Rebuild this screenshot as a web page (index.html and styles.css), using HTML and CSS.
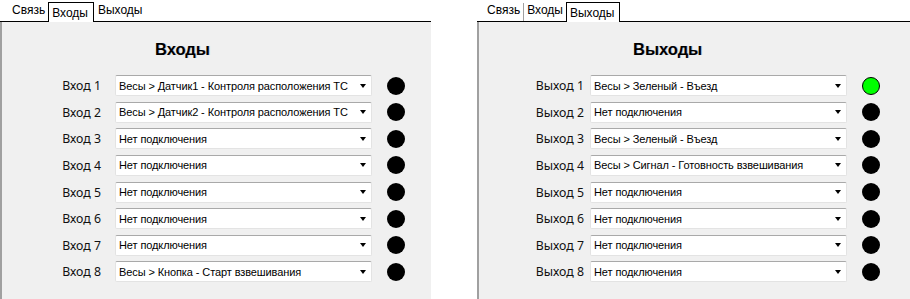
FILE: index.html
```html
<!DOCTYPE html>
<html lang="ru">
<head>
  <meta charset="UTF-8">
  <title>Входы / Выходы</title>
  <link rel="stylesheet" href="styles.css">
</head>
<body>
  <div class="wrap">

    <!-- Панель входов -->
    <div class="panel panel-in">
      <div class="tabs">
        <span class="tab">Связь</span>
        <span class="tab active">Входы</span>
        <span class="tab">Выходы</span>
      </div>
      <div class="content">
        <h2>Входы</h2>
        <div class="rows" id="inputs"></div>
      </div>
    </div>

    <!-- Панель выходов -->
    <div class="panel panel-out">
      <div class="tabs">
        <span class="tab">Связь</span>
        <span class="tab sep">Входы</span>
        <span class="tab active">Выходы</span>
      </div>
      <div class="content">
        <h2>Выходы</h2>
        <div class="rows" id="outputs"></div>
      </div>
    </div>

  </div>

  <script>
    const inputs = [
      "Весы > Датчик1 - Контроля расположения ТС",
      "Весы > Датчик2 - Контроля расположения ТС",
      "Нет подключения", "Нет подключения", "Нет подключения",
      "Нет подключения", "Нет подключения",
      "Весы > Кнопка - Старт взвешивания"
    ];
    const outputs = [
      "Весы > Зеленый - Въезд", "Нет подключения",
      "Весы > Зеленый - Въезд", "Весы > Сигнал - Готовность взвешивания",
      "Нет подключения", "Нет подключения", "Нет подключения", "Нет подключения"
    ];

    function fill(id, name, list, onIdx) {
      const box = document.getElementById(id);
      list.forEach((v, i) => {
        box.innerHTML +=
          `<label>${name} ${i+1}</label>` +
          `<div class="combo"><span>${v}</span><i class="arrow"></i></div>` +
          `<div class="led${i === onIdx ? " on" : ""}"></div>`;
      });
    }

    fill("inputs", "Вход", inputs, -1);
    fill("outputs", "Выход", outputs, 0);
  </script>
</body>
</html>
```

FILE: styles.css
```css
body { margin: 0; background: #fff; font-family: "Liberation Sans", Arial, sans-serif; }
.wrap { display: flex; gap: 46px; height: 299px; }
.panel { display: flex; flex-direction: column; }
.panel-in { width: 431px; }
.panel-out { width: 433px; }

.tabs { height: 21px; border-bottom: 1px solid #000; display: flex; align-items: flex-end; padding-left: 5px; font-size: 12px; }
.panel-out .tabs { padding-left: 6px; }
.tab { padding: 0 3px 3px 4px; height: 15px; color: #000; }
.panel-in .tab:first-child { padding-left: 7px; }
.panel-out .tab:first-child { padding-left: 4px; }
.tab.sep { border-left: 1px solid #a0a0a0; padding-left: 3px; }
.tab.active { background: #fff; border: 1px solid #000; border-bottom: none; height: 19px; padding: 0 5px 0 3px; margin-bottom: -1px; line-height: 20px; }

.content { flex: 1; background: #f0f0f0; border-left: 2px solid #a0a0a0; }
h2 { margin: 0; padding-top: 18px; height: 36px; box-sizing: border-box; font-size: 16.5px; font-weight: bold; text-shadow: 1px 0 0 rgba(40,60,120,0.25); }
.panel-in h2 { padding-left: 153px; }
.panel-out h2 { padding-left: 154px; }

.rows { display: grid; grid-template-columns: 99px 257px 18px; column-gap: 14px; grid-auto-rows: 21px; row-gap: 5.65px; margin-top: 17px; align-items: center; }
.panel-out .rows { grid-template-columns: 105px 257px 18px; column-gap: 6px; }
.rows label { text-align: right; font-family: "Noto Sans", sans-serif; font-size: 12.3px; color: #111; }
.combo { height: 21px; box-sizing: border-box; background: #fff; border: 1px solid #e3e3e3; border-top-color: #a9a9a9; border-radius: 2px; display: flex; align-items: center; padding-left: 3px; font-size: 11px; letter-spacing: -0.1px; color: #000; }
.combo span { flex: 1; white-space: nowrap; overflow: hidden; }
.arrow { flex: none; width: 0; height: 0; border-left: 3.5px solid transparent; border-right: 3.5px solid transparent; border-top: 4px solid #000; margin: 0 5px 0 3px; }
.led { width: 18px; height: 18px; border-radius: 50%; background: #000; }
.panel-in .led { margin-left: 1px; }
.panel-out .led { margin-left: 9px; }
.led.on { background: #00ff00; border: 1px solid #000; box-sizing: border-box; }
```
